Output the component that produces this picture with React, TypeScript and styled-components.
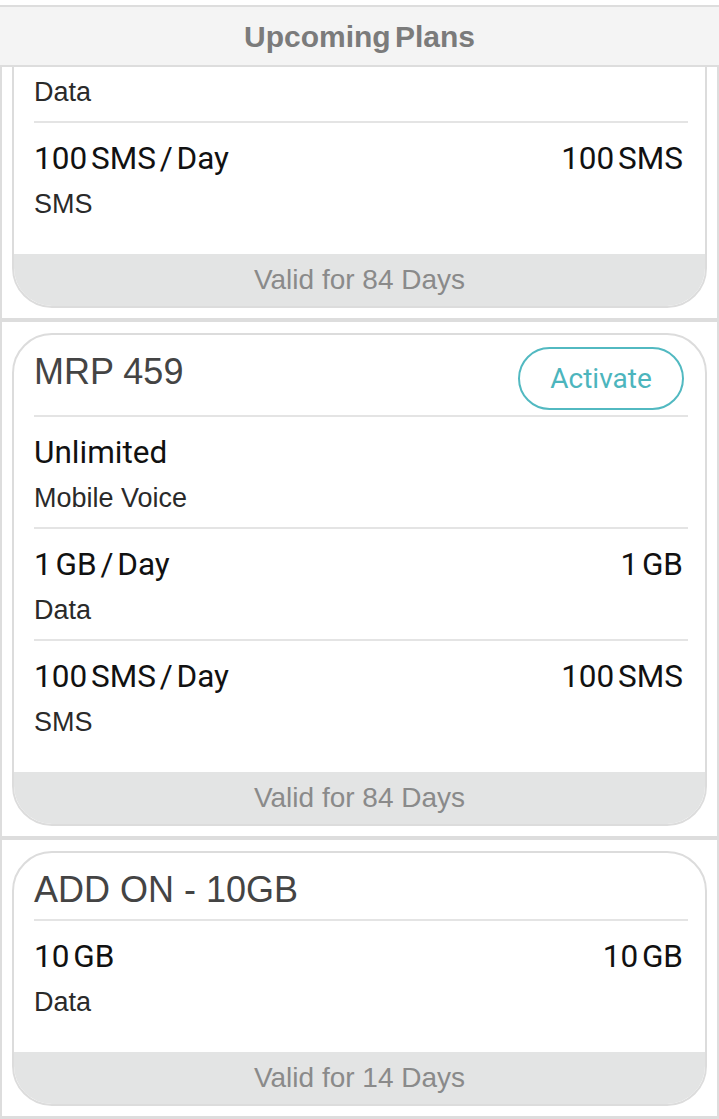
import { useEffect, useRef } from 'react';
import styled, { createGlobalStyle } from 'styled-components';

type Benefit = { label: string; kind: string; amount?: string };
type Plan = { id: number; title: string; benefits: Benefit[]; validity: string; canActivate?: boolean };

const plans: Plan[] = [
  {
    id: 1,
    title: 'MRP 459',
    canActivate: true,
    benefits: [
      { label: 'Unlimited', kind: 'Mobile Voice' },
      { label: '1 GB / Day', kind: 'Data', amount: '1 GB' },
      { label: '100 SMS / Day', kind: 'SMS', amount: '100 SMS' },
    ],
    validity: 'Valid for 84 Days',
  },
  {
    id: 2,
    title: 'MRP 459',
    canActivate: true,
    benefits: [
      { label: 'Unlimited', kind: 'Mobile Voice' },
      { label: '1 GB / Day', kind: 'Data', amount: '1 GB' },
      { label: '100 SMS / Day', kind: 'SMS', amount: '100 SMS' },
    ],
    validity: 'Valid for 84 Days',
  },
  {
    id: 3,
    title: 'ADD ON - 10GB',
    benefits: [{ label: '10 GB', kind: 'Data', amount: '10 GB' }],
    validity: 'Valid for 14 Days',
  },
  {
    id: 4,
    title: 'ADD ON - 10GB',
    benefits: [{ label: '10 GB', kind: 'Data', amount: '10 GB' }],
    validity: 'Valid for 14 Days',
  },
];

function App() {
  const listRef = useRef<HTMLDivElement>(null);

  // the list is shown scrolled part way into the first plan
  useEffect(() => {
    if (listRef.current) listRef.current.scrollTop = 263;
  }, []);

  return (
    <>
      <GlobalStyle />
      <Page>
        <Header>Upcoming Plans</Header>
        <PlanList ref={listRef}>
          {plans.map((plan) => (
            <PlanBlock key={plan.id}>
              <Card>
                <CardBody>
                  <TitleRow>
                    <PlanTitle>{plan.title}</PlanTitle>
                    {plan.canActivate && <ActivateButton>Activate</ActivateButton>}
                  </TitleRow>
                  {plan.benefits.map((b) => (
                    <BenefitRow key={b.label}>
                      <BenefitTop>
                        <span>{b.label}</span>
                        {b.amount && <span>{b.amount}</span>}
                      </BenefitTop>
                      <BenefitKind>{b.kind}</BenefitKind>
                    </BenefitRow>
                  ))}
                </CardBody>
                <Validity>{plan.validity}</Validity>
              </Card>
            </PlanBlock>
          ))}
        </PlanList>
      </Page>
    </>
  );
}

const GlobalStyle = createGlobalStyle`
  html, body {
    margin: 0;
    padding: 0;
    background: #ffffff;
  }
  * {
    box-sizing: border-box;
  }
`;

const Page = styled.div`
  display: flex;
  flex-direction: column;
  height: 100vh;
  padding-top: 5px;
`;

const Header = styled.header`
  flex: none;
  height: 62px;
  background: #f4f4f4;
  border-top: 2px solid #dddddd;
  border-bottom: 2px solid #dddddd;
  display: flex;
  align-items: center;
  justify-content: center;
  padding-top: 2px;
  font-family: 'Liberation Sans', Arial, sans-serif;
  font-weight: 700;
  font-size: 30px;
  word-spacing: -4px;
  color: #7b7b7b;
`;

const PlanList = styled.div`
  flex: 1;
  overflow: hidden;
  background: #dddddd;
  padding: 0 2px;
  display: flex;
  flex-direction: column;
  gap: 4px;
`;

const PlanBlock = styled.section`
  flex: none;
  background: #ffffff;
  padding: 11px 10px 10px;
`;

const Card = styled.div`
  border: 2px solid #dcdcdc;
  border-radius: 40px;
  overflow: hidden;
`;

const CardBody = styled.div`
  padding: 0 17px 21px 20px;
`;

const TitleRow = styled.div`
  display: flex;
  justify-content: space-between;
  align-items: flex-start;
  padding: 12px 4px 5px 0;
`;

const PlanTitle = styled.h2`
  margin: 0;
  line-height: 49px;
  font-family: 'Liberation Sans', Arial, sans-serif;
  font-weight: 400;
  font-size: 36px;
  color: #444444;
`;

const ActivateButton = styled.button`
  width: 166px;
  height: 63px;
  border: 2px solid #52b9c1;
  border-radius: 32px;
  background: #ffffff;
  color: #4cb5bd;
  font-family: Roboto, 'Liberation Sans', sans-serif;
  font-size: 28px;
  padding: 0;
  cursor: pointer;
`;

const BenefitRow = styled.div`
  border-top: 2px solid #e4e4e4;
  padding: 18px 5px 11px 0;
`;

const BenefitTop = styled.div`
  display: flex;
  justify-content: space-between;
  line-height: 36px;
  font-family: Roboto, 'Liberation Sans', sans-serif;
  font-size: 31.5px;
  word-spacing: -4px;
  color: #111111;
`;

const BenefitKind = styled.div`
  margin-top: 9px;
  line-height: 36px;
  font-family: 'Liberation Sans', Arial, sans-serif;
  font-size: 27px;
  color: #2a2a2a;
`;

const Validity = styled.div`
  height: 52px;
  background: #e3e4e4;
  display: flex;
  align-items: center;
  justify-content: center;
  font-family: 'Liberation Sans', Arial, sans-serif;
  font-size: 28px;
  color: #8a8a8a;
`;

export default App;
